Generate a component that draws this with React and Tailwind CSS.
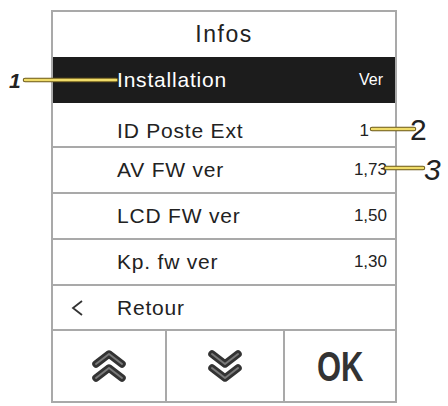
const rows = [
  { label: "ID Poste Ext", value: "1", h: "h-[43px] pt-[12px]", top: false, vpad: "pr-[26px]" },
  { label: "AV FW ver", value: "1,73", h: "h-[46px]", top: true, vpad: "pr-[8px]" },
  { label: "LCD FW ver", value: "1,50", h: "h-[46px]", top: true, vpad: "pr-[8px]" },
  { label: "Kp. fw ver", value: "1,30", h: "h-[46px]", top: true, vpad: "pr-[8px]" },
];

const Chevrons = ({ down }) => (
  <svg width="34" height="32" viewBox="0 0 34 32" className={down ? "rotate-180" : ""}>
    {[
      "4,14 17,4 30,14",
      "4,28 17,18 30,28",
    ].map((p) => (
      <g key={p}>
        <polyline points={p} fill="none" stroke="#333" strokeWidth="7.5" strokeLinecap="round" strokeLinejoin="round" />
        <polyline points={p} fill="none" stroke="#7a7a7a" strokeWidth="2" strokeLinecap="round" strokeLinejoin="round" />
      </g>
    ))}
  </svg>
);

const Pointer = ({ x1, x2, y }) => (
  <svg
    className="absolute left-0 top-0 pointer-events-none"
    width="448"
    height="406"
    viewBox="0 0 448 406"
  >
    <line x1={x1} y1={y} x2={x2} y2={y} stroke="#6b5a1e" strokeWidth="4.5" strokeLinecap="round" />
    <line x1={x1} y1={y} x2={x2} y2={y} stroke="#f0dc6a" strokeWidth="2.5" strokeLinecap="round" />
  </svg>
);

export default function App() {
  return (
    <div
      className="relative w-[448px] h-[406px] bg-white overflow-hidden text-[#222]"
      style={{ fontFamily: '"Liberation Sans", Arial, sans-serif' }}
    >
      <div className="ml-[51px] mt-[10px] w-[346px] border-2 border-[#a9a9a9] flex flex-col">
        {/* header */}
        <div className="h-[45px] flex items-center justify-center text-[23px] tracking-[1.5px]">
          Infos
        </div>

        {/* selected row */}
        <div className="h-[46px] bg-[#1c1c1c] text-white flex items-center pl-[64px] pr-[12px]">
          <span className="text-[21px] tracking-[0.8px]">Installation</span>
          <span className="ml-auto text-[16px]">Ver</span>
        </div>

        {rows.map((r) => (
          <div
            key={r.label}
            className={`${r.h} ${r.top ? "border-t-2 border-[#a9a9a9]" : ""} ${r.vpad} flex items-center pl-[64px]`}
          >
            <span className="text-[21px] tracking-[0.8px]">{r.label}</span>
            <span className="ml-auto text-[17px]">{r.value}</span>
          </div>
        ))}

        {/* back */}
        <div className="h-[45px] border-t-2 border-[#a9a9a9] flex items-center">
          <svg width="14" height="20" viewBox="0 0 14 20" className="ml-[17px] mr-[33px]">
            <polyline points="12,3 3,10 12,17" fill="none" stroke="#333" strokeWidth="1.8" />
          </svg>
          <span className="text-[21px] tracking-[0.8px]">Retour</span>
        </div>

        {/* buttons */}
        <div className="h-[72px] border-t-2 border-[#a9a9a9] flex">
          <div className="w-[112px] flex items-center justify-center">
            <Chevrons />
          </div>
          <div className="w-[118px] border-l-2 border-[#a9a9a9] flex items-center justify-center">
            <Chevrons down />
          </div>
          <div className="flex-1 border-l-2 border-[#a9a9a9] flex items-center justify-center">
            <span className="text-[43px] font-bold text-[#333] scale-x-[0.72] leading-none">OK</span>
          </div>
        </div>
      </div>

      {/* callouts */}
      <Pointer x1={25} x2={116} y={80} />
      <Pointer x1={372} x2={414} y={129} />
      <Pointer x1={386} x2={423} y={168} />
      <span className="absolute left-[9px] top-[70px] text-[21px] font-bold italic leading-none">1</span>
      <span className="absolute left-[410px] top-[115px] text-[30px] leading-none">2</span>
      <span className="absolute left-[424px] top-[155px] text-[30px] italic leading-none">3</span>
    </div>
  );
}
